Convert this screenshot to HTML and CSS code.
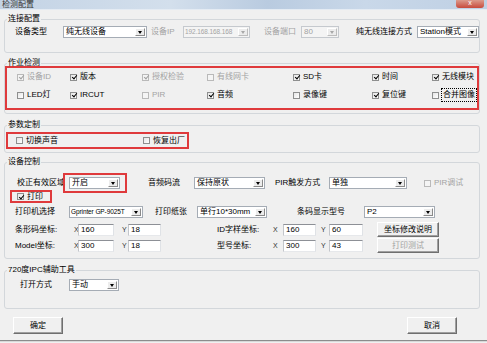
FILE: index.html
```html
<!DOCTYPE html>
<html lang="zh-CN">
<head>
  <meta charset="UTF-8">
  <title>检测配置</title>
  <link rel="stylesheet" href="styles.css">
</head>
<body>
  <div class="window">
    <div class="titlebar">
      <span class="title">检测配置</span>
      <span class="close">x</span>
    </div>

    <div class="content">
      <!-- 连接配置 -->
      <fieldset class="group g-conn">
        <legend>连接配置</legend>
        <div class="row r-conn">
          <span class="lbl w48">设备类型</span>
          <div class="combo w84"><span class="val">纯无线设备</span><i class="drop"></i></div>
          <span class="lbl dim w32 ml4">设备IP</span>
          <div class="combo off w67"><span class="val small">192.168.168.168</span><i class="drop"></i></div>
          <span class="lbl dim w37 ml14">设备端口</span>
          <div class="combo off w38"><span class="val">80</span><i class="drop"></i></div>
          <span class="lbl w61 ml17">纯无线连接方式</span>
          <div class="combo w62"><span class="val">Station模式</span><i class="drop"></i></div>
        </div>
      </fieldset>

      <!-- 作业检测 -->
      <fieldset class="group g-check">
        <legend>作业检测</legend>
        <div class="mark mark-check">
          <div class="checks">
            <label class="chk on dis"><i class="box"></i>设备ID</label>
            <label class="chk on"><i class="box"></i>版本</label>
            <label class="chk on dis"><i class="box"></i>授权检验</label>
            <label class="chk dis"><i class="box"></i>有线网卡</label>
            <label class="chk on"><i class="box"></i>SD卡</label>
            <label class="chk on"><i class="box"></i>时间</label>
            <label class="chk on"><i class="box"></i>无线模块</label>

            <label class="chk"><i class="box"></i>LED灯</label>
            <label class="chk on"><i class="box"></i>IRCUT</label>
            <label class="chk dis"><i class="box"></i>PIR</label>
            <label class="chk on"><i class="box"></i>音频</label>
            <label class="chk"><i class="box"></i>录像键</label>
            <label class="chk on"><i class="box"></i>复位键</label>
            <label class="chk"><i class="box"></i><span class="focus">合并图像</span></label>
          </div>
        </div>
      </fieldset>

      <!-- 参数定制 -->
      <fieldset class="group g-param">
        <legend>参数定制</legend>
        <div class="mark mark-param">
          <label class="chk w127"><i class="box"></i>切换声音</label>
          <label class="chk"><i class="box"></i>恢复出厂</label>
        </div>
      </fieldset>

      <!-- 设备控制 -->
      <fieldset class="group g-ctrl">
        <legend>设备控制</legend>
        <div class="row r-a">
          <span class="lbl w46">校正有效区域</span>
          <div class="mark mark-area">
            <div class="combo w51"><span class="val">开启</span><i class="drop"></i></div>
          </div>
          <span class="lbl w46 ml21">音频码流</span>
          <div class="combo w71"><span class="val">保持原状</span><i class="drop"></i></div>
          <span class="lbl w54 ml10">PIR触发方式</span>
          <div class="combo w78"><span class="val">单独</span><i class="drop"></i></div>
          <label class="chk dis ml17"><i class="box"></i>PIR调试</label>
        </div>

        <div class="row r-b">
          <div class="mark mark-print">
            <label class="chk on"><i class="box"></i>打印</label>
          </div>
        </div>

        <div class="row r-c">
          <span class="lbl w54">打印机选择</span>
          <div class="combo w74"><span class="val small">Gprinter GP-9025T</span><i class="drop"></i></div>
          <span class="lbl w42 ml12">打印纸张</span>
          <div class="combo w70"><span class="val">单行10*30mm</span><i class="drop"></i></div>
          <span class="lbl w67 ml30">条码显示型号</span>
          <div class="combo w71"><span class="val">P2</span><i class="drop"></i></div>
        </div>

        <div class="row r-d">
          <span class="lbl w59">条形码坐标:</span>
          <span class="axis w4">X</span>
          <span class="field w36">160</span>
          <span class="axis w6 ml8">Y</span>
          <span class="field w33">18</span>
          <span class="lbl w56 ml56">ID字样坐标:</span>
          <span class="axis w10">X</span>
          <span class="field w33">160</span>
          <span class="axis w8 ml5">Y</span>
          <span class="field w34">60</span>
          <span class="btn w62 ml14">坐标修改说明</span>
        </div>

        <div class="row r-e">
          <span class="lbl w59">Model坐标:</span>
          <span class="axis w4">X</span>
          <span class="field w36">300</span>
          <span class="axis w6 ml8">Y</span>
          <span class="field w33">18</span>
          <span class="lbl w56 ml56">型号坐标:</span>
          <span class="axis w10">X</span>
          <span class="field w33">300</span>
          <span class="axis w8 ml5">Y</span>
          <span class="field w34">43</span>
          <span class="btn off w62 ml14">打印测试</span>
        </div>
      </fieldset>

      <!-- 720度IPC辅助工具 -->
      <fieldset class="group g-tool">
        <legend>720度IPC辅助工具</legend>
        <div class="row r-tool">
          <span class="lbl w49">打开方式</span>
          <div class="combo w50"><span class="val">手动</span><i class="drop"></i></div>
        </div>
      </fieldset>

      <div class="actions">
        <span class="btn big">确定</span>
        <span class="btn big">取消</span>
      </div>
    </div>

    <div class="frame-bottom"></div>
  </div>
</body>
</html>
```

FILE: styles.css
```css
* {
  box-sizing: border-box;
}

body {
  margin: 0;
  background-color: #f0f0f0;
  font-family: "Liberation Sans", "Noto Sans CJK SC", sans-serif;
  font-size: 8px;
  line-height: 12px;
  color: #000;
}

.window {
  width: 487px;
  height: 343px;
  overflow: hidden;
}

/* title bar */
.titlebar {
  display: flex;
  align-items: flex-start;
  height: 10px;
  background: linear-gradient(90deg, #c3d3e5, #d3dfec 35%, #b9cbe0 55%, #c9d8e9 75%, #bfd0e4);
  border-bottom: 1px solid #e4ebf3;
}

.title {
  margin: 0 0 0 2px;
  font-size: 8px;
  line-height: 9px;
  color: #333;
}

.close {
  margin-left: auto;
  margin-right: 3px;
  width: 28px;
  height: 8px;
  background: linear-gradient(#dc9a8c, #c84a3c);
  border-radius: 0 0 3px 3px;
  color: #fff;
  font-size: 7px;
  line-height: 6px;
  text-align: center;
}

.content {
  padding: 0 7px 0 4px;
}

/* group boxes */
.group {
  margin: 0;
  padding: 0;
  min-width: 0;
  border: 1px solid #d3d7db;
  border-radius: 3px;
}

.group legend {
  margin-left: 2px;
  padding: 0 1px;
  height: 12px;
  line-height: 12px;
}

.g-conn { margin-top: 3px; padding-bottom: 13px; }
.g-check { margin-top: 4px; padding-bottom: 3px; }
.g-param { margin-top: 5px; padding-bottom: 3px; }
.g-ctrl { margin-top: 3px; padding-bottom: 5px; }
.g-tool { margin-top: 5px; padding-bottom: 16px; }

.row {
  display: flex;
  align-items: center;
  padding-left: 10px;
  height: 14px;
}

.r-a { height: 20px; margin-top: 5px; padding-left: 12px; }
.r-b { height: 13px; margin-top: -3px; padding-left: 5px; }
.r-c { margin-top: 2px; }
.r-d { height: 15px; margin-top: 3px; }
.r-e { height: 15px; margin-top: 1px; }
.r-tool { margin-top: 2px; padding-left: 15px; }

/* red highlight frames */
.mark {
  border: 2px solid #df3a3c;
}

.mark-check {
  margin-top: -3px;
  height: 44px;
  padding: 2px 0 0 10px;
}

.mark-param {
  display: flex;
  align-items: center;
  margin: 1px 0 0 1px;
  width: 183px;
  height: 17px;
  padding-left: 8px;
}

.mark-area {
  display: flex;
  align-items: center;
  width: 64px;
  height: 20px;
  padding-left: 4px;
}

.mark-print {
  display: flex;
  align-items: center;
  width: 42px;
  height: 13px;
  padding-left: 5px;
}

.checks {
  display: grid;
  grid-template-columns: 53px 72px 65px 86px 79px 60px 1fr;
  grid-auto-rows: 14px;
  row-gap: 4px;
}

/* labels */
.lbl {
  flex: none;
  white-space: nowrap;
}

.dim {
  color: #a3a3a3;
}

.axis {
  flex: none;
  font-size: 7px;
  color: #333;
}

/* checkbox */
.chk {
  display: flex;
  align-items: center;
  white-space: nowrap;
  flex: none;
}

.box {
  position: relative;
  flex: none;
  width: 7px;
  height: 7px;
  margin-right: 3px;
  border: 1px solid #8e8f8f;
  background: linear-gradient(135deg, #e6e6e6, #fff);
}

.chk.on .box::after {
  content: "";
  position: absolute;
  left: 1.5px;
  top: -0.5px;
  width: 2px;
  height: 4px;
  border: solid #000;
  border-width: 0 1.5px 1.5px 0;
  transform: rotate(40deg);
}

.chk.dis {
  color: #a3a3a3;
}

.chk.dis .box {
  border-color: #b9b9b9;
  background: #f4f4f4;
}

.chk.dis.on .box::after {
  border-color: #a0a0a0;
}

.focus {
  outline: 1px dotted #000;
  outline-offset: 0;
  padding: 0 1px;
}

/* combo box */
.combo {
  display: flex;
  flex: none;
  height: 12px;
  border: 1px solid #a5acb5;
  background-color: #fff;
}

.combo .val {
  flex: 1;
  overflow: hidden;
  padding-left: 2px;
  line-height: 10px;
  white-space: nowrap;
}

.combo .val.small {
  padding-left: 1px;
  font-size: 6.5px;
  letter-spacing: -0.1px;
}

.drop {
  display: flex;
  align-items: center;
  justify-content: center;
  width: 10px;
  margin: 1px;
  border: 1px solid;
  border-color: #fff #8a8a8a #8a8a8a #fff;
  background-color: #ececec;
}

.drop::after {
  content: "";
  border-left: 2.5px solid transparent;
  border-right: 2.5px solid transparent;
  border-top: 3px solid #000;
}

.combo.off {
  background-color: #f4f4f4;
  border-color: #c5c9ce;
  color: #a3a3a3;
}

.combo.off .drop {
  border-color: #fff #bdbdbd #bdbdbd #fff;
}

.combo.off .drop::after {
  border-top-color: #a8a8a8;
}

/* text field */
.field {
  flex: none;
  height: 12px;
  padding-left: 2px;
  line-height: 10px;
  background-color: #fff;
  border: 1px solid;
  border-color: #8d9096 #dfe2e6 #e6e8eb #c3c6cb;
}

/* buttons */
.btn {
  flex: none;
  height: 15px;
  line-height: 13px;
  text-align: center;
  background-color: #f0f0f0;
  border: 1px solid;
  border-color: #fff #6f6f6f #6f6f6f #fff;
  box-shadow: inset -1px -1px 0 #a0a0a0;
}

.btn.off {
  color: #a3a3a3;
}

.btn.big {
  width: 50px;
  height: 17px;
  line-height: 15px;
}

.actions {
  display: flex;
  justify-content: space-between;
  margin-top: 8px;
  padding: 0 23px 0 9px;
}

.frame-bottom {
  margin-top: 6px;
  height: 2px;
  border-top: 1px solid #8c8c8c;
  background-color: #d8d8d8;
}

/* widths and offsets */
.w4 { width: 4px; }
.w6 { width: 6px; }
.w8 { width: 8px; }
.w10 { width: 10px; }
.w32 { width: 32px; }
.w33 { width: 33px; }
.w34 { width: 34px; }
.w36 { width: 36px; }
.w37 { width: 37px; }
.w38 { width: 38px; }
.w42 { width: 42px; }
.w46 { width: 46px; }
.w48 { width: 48px; }
.w49 { width: 49px; }
.w50 { width: 50px; }
.w51 { width: 51px; }
.w54 { width: 54px; }
.w56 { width: 56px; }
.w59 { width: 59px; }
.w61 { width: 61px; }
.w62 { width: 62px; }
.w67 { width: 67px; }
.w70 { width: 70px; }
.w71 { width: 71px; }
.w74 { width: 74px; }
.w78 { width: 78px; }
.w84 { width: 84px; }
.w127 { width: 127px; }

.ml4 { margin-left: 4px; }
.ml5 { margin-left: 5px; }
.ml8 { margin-left: 8px; }
.ml10 { margin-left: 10px; }
.ml12 { margin-left: 12px; }
.ml14 { margin-left: 14px; }
.ml17 { margin-left: 17px; }
.ml21 { margin-left: 21px; }
.ml30 { margin-left: 30px; }
.ml56 { margin-left: 56px; }
```
